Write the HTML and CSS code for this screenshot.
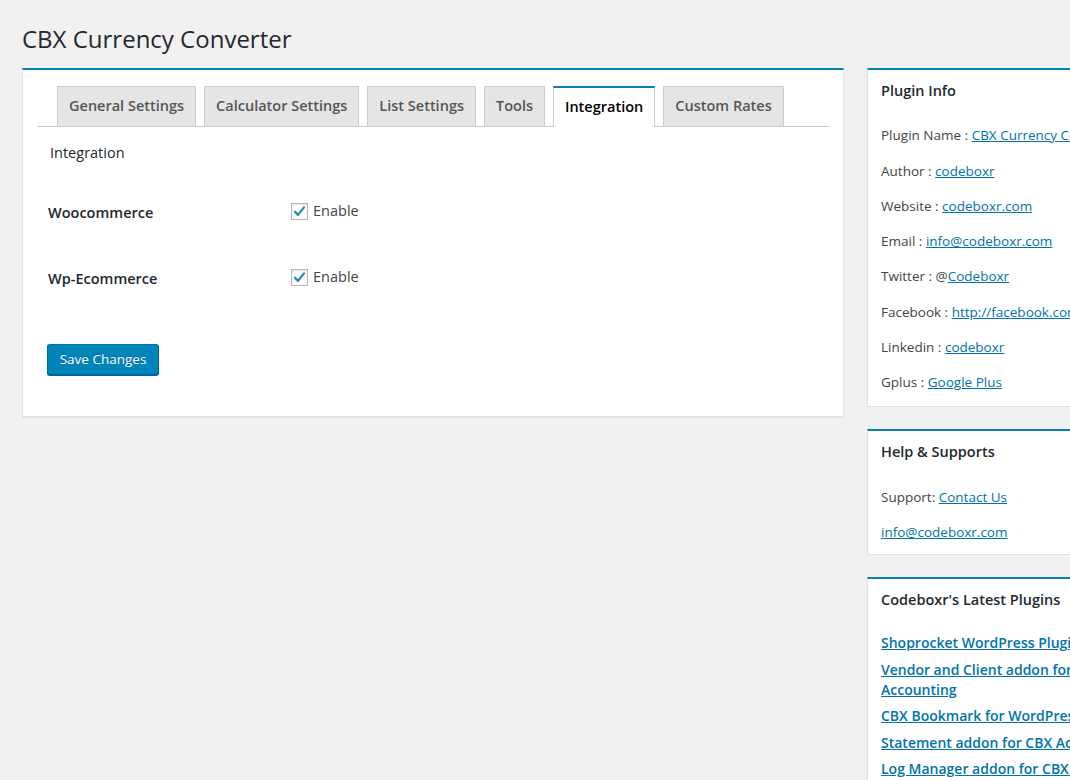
FILE: index.html
```html
<!DOCTYPE html>
<html>
<head>
<meta charset="utf-8">
<link rel="stylesheet" href="styles.css">
</head>
<body>
<div class="wrap">
  <h1 class="page-title">CBX Currency Converter</h1>
  <div class="columns">
    <div class="main">
      <div class="panel">
        <div class="tabs">
          <a class="tab">General Settings</a>
          <a class="tab">Calculator Settings</a>
          <a class="tab">List Settings</a>
          <a class="tab">Tools</a>
          <a class="tab active">Integration</a>
          <a class="tab">Custom Rates</a>
        </div>
        <div class="section-title">Integration</div>
        <div class="form-rows">
          <div class="form-row">
            <div class="label">Woocommerce</div>
            <label class="check">
              <span class="box"><svg viewBox="0 0 16 16" width="16" height="16"><path d="M3.2 8.2 L6.4 11.6 L12.8 3.6" fill="none" stroke="#1e8cbe" stroke-width="2.4" stroke-linecap="round" stroke-linejoin="round"/></svg></span>
              Enable
            </label>
          </div>
          <div class="form-row">
            <div class="label">Wp-Ecommerce</div>
            <label class="check">
              <span class="box"><svg viewBox="0 0 16 16" width="16" height="16"><path d="M3.2 8.2 L6.4 11.6 L12.8 3.6" fill="none" stroke="#1e8cbe" stroke-width="2.4" stroke-linecap="round" stroke-linejoin="round"/></svg></span>
              Enable
            </label>
          </div>
        </div>
        <button class="btn-primary">Save Changes</button>
      </div>
    </div>
    <div class="sidebar">
      <div class="box-panel">
        <h3 class="box-title">Plugin Info</h3>
        <div class="info-list">
          <p>Plugin Name : <a href="#">CBX Currency Converter</a></p>
          <p>Author : <a href="#">codeboxr</a></p>
          <p>Website : <a href="#">codeboxr.com</a></p>
          <p>Email : <a href="#">info@codeboxr.com</a></p>
          <p>Twitter : @<a href="#">Codeboxr</a></p>
          <p>Facebook : <a href="#">http://facebook.com/codeboxr</a></p>
          <p>Linkedin : <a href="#">codeboxr</a></p>
          <p>Gplus : <a href="#">Google Plus</a></p>
        </div>
      </div>
      <div class="box-panel">
        <h3 class="box-title">Help &amp; Supports</h3>
        <div class="info-list">
          <p>Support: <a href="#">Contact Us</a></p>
          <p><a href="#">info@codeboxr.com</a></p>
        </div>
      </div>
      <div class="box-panel">
        <h3 class="box-title">Codeboxr's Latest Plugins</h3>
        <ul class="plugin-list">
          <li><a href="#">Shoprocket WordPress Plugin</a></li>
          <li><a href="#">Vendor and Client addon for CBX Accounting</a></li>
          <li><a href="#">CBX Bookmark for WordPress</a></li>
          <li><a href="#">Statement addon for CBX Accounting</a></li>
          <li><a href="#">Log Manager addon for CBX Accounting</a></li>
        </ul>
      </div>
    </div>
  </div>
</div>
</body>
</html>
```
FILE: styles.css
```css
html, body {
  margin: 0;
  padding: 0;
  background: #f1f1f1;
  overflow: hidden;
}
body {
  font-family: "Open Sans", "Noto Sans", sans-serif;
  color: #23282d;
  font-size: 13.5px;
  width: 1070px;
  height: 780px;
}
.wrap {
  padding: 0 0 0 22px;
}
.page-title {
  font-size: 24px;
  font-weight: 400;
  margin: 0;
  padding: 24px 0 0 0;
  line-height: 30px;
  height: 44px;
  color: #23282d;
}
.columns {
  display: flex;
  gap: 23px;
  align-items: flex-start;
}
.main {
  width: 822px;
  flex: none;
}
.panel {
  background: #fff;
  border: 1px solid #e2e2e2;
  border-top: 2px solid #0a7fb4;
  padding: 16px 14px 41px 14px;
  box-shadow: 0 1px 1px rgba(0,0,0,0.04);
}
.tabs {
  display: flex;
  gap: 8px;
  padding-left: 20px;
  border-bottom: 1px solid #ccc;
  height: 40px;
  align-items: flex-end;
}
.tab {
  box-sizing: border-box;
  height: 40px;
  padding: 0 11px 2px;
  background: #e5e5e5;
  border: 1px solid #ccc;
  border-bottom: none;
  font-weight: 600;
  font-size: 14.5px;
  color: #555;
  display: flex;
  align-items: center;
  line-height: 20px;
  text-decoration: none;
}
.tab.active {
  background: #fff;
  color: #000;
  border-top: 2px solid #0a7fb4;
  height: 41px;
  margin-bottom: -1px;
  padding-top: 1px;
}
.section-title {
  font-size: 14.5px;
  padding: 16px 0 0 13px;
  line-height: 20px;
  color: #23282d;
}
.form-rows {
  padding-top: 34px;
}
.form-row {
  display: flex;
  align-items: flex-start;
  height: 66px;
}
.label {
  width: 243px;
  padding-left: 11px;
  flex: none;
  font-weight: 600;
  font-size: 14.5px;
  line-height: 20px;
  padding-top: 6px;
  color: #23282d;
}
.check {
  display: flex;
  align-items: center;
  gap: 5px;
  font-size: 14.5px;
  line-height: 20px;
  color: #444;
  padding-top: 4px;
}
.box {
  box-sizing: border-box;
  width: 17px;
  height: 17px;
  border: 1px solid #b4b9be;
  box-shadow: inset 0 1px 2px rgba(0,0,0,0.1);
  background: #fff;
  display: flex;
  align-items: center;
  justify-content: center;
}
.box svg {
  width: 15px;
  height: 15px;
}
.btn-primary {
  margin: 15px 0 0 10px;
  box-sizing: border-box;
  height: 31px;
  width: 112px;
  background: #0085ba;
  border: 1px solid #0073aa;
  border-color: #0073aa #006799 #006799;
  border-radius: 3px;
  box-shadow: 0 1px 0 #006799;
  color: #fff;
  font-family: "Open Sans", "Noto Sans", sans-serif;
  font-size: 13.5px;
  text-shadow: 0 -1px 1px #006799;
  padding: 0 8px 2px;
}
.sidebar {
  width: 300px;
  flex: none;
  display: flex;
  flex-direction: column;
  gap: 23px;
}
.box-panel {
  background: #fff;
  border-top: 2px solid #0a7fb4;
  border-left: 1px solid #e2e2e2;
  box-shadow: 0 1px 1px rgba(0,0,0,0.05);
  padding: 11px 14px 14px 13px;
}
.box-title {
  margin: 0;
  font-size: 14.5px;
  font-weight: 600;
  line-height: 20px;
  color: #23282d;
}
.info-list {
  padding-top: 9px;
}
.info-list p {
  margin: 15.3px 0 0 0;
  line-height: 20px;
  white-space: nowrap;
  color: #444;
  font-size: 13.5px;
}
.box-panel:nth-child(2) {
  padding-bottom: 12px;
}
a {
  color: #0073aa;
  text-decoration: underline;
}
.plugin-list {
  list-style: none;
  margin: 0;
  padding: 17px 0 0 0;
}
.plugin-list li {
  margin-top: 6.5px;
  line-height: 20px;
  font-size: 14px;
  font-weight: 600;
}
```
